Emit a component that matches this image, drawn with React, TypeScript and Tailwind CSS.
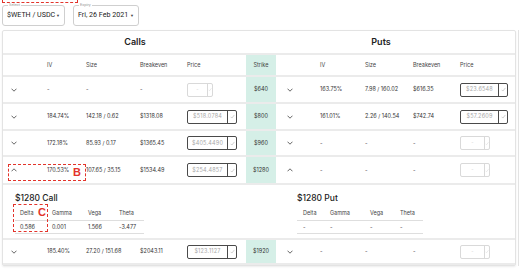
import React from 'react';

type Side = { iv: string; size: string; be: string; price: string | null; open?: boolean };
type Row = { strike: string; call: Side; put: Side; h: string };

const rows: Row[] = [
  { strike: '$640', h: 'h-[27px]', call: { iv: '-', size: '-', be: '-', price: null }, put: { iv: '163.75%', size: '7.98 / 160.02', be: '$616.35', price: '$23.6548' } },
  { strike: '$800', h: 'h-[27px]', call: { iv: '184.74%', size: '142.18 / 0.62', be: '$1318.08', price: '$518.0784' }, put: { iv: '161.01%', size: '2.26 / 140.54', be: '$742.74', price: '$57.2609' } },
  { strike: '$960', h: 'h-[26px]', call: { iv: '172.18%', size: '85.93 / 0.17', be: '$1365.45', price: '$405.4490' }, put: { iv: '-', size: '-', be: '-', price: null } },
  { strike: '$1280', h: 'h-[28px]', call: { iv: '170.53%', size: '107.65 / 35.15', be: '$1534.49', price: '$254.4857', open: true }, put: { iv: '-', size: '-', be: '-', price: null, open: true } },
  { strike: '$1920', h: 'h-[25px]', call: { iv: '185.40%', size: '27.20 / 151.68', be: '$2043.11', price: '$123.1127' }, put: { iv: '-', size: '-', be: '-', price: null } },
];

function Chevron({ up }: { up?: boolean }) {
  return (
    <svg width="6" height="4" viewBox="0 0 6 4" className={up ? 'rotate-180' : ''}>
      <path d="M0.5 0.7 L3 3.2 L5.5 0.7" fill="none" stroke="#555" strokeWidth="0.9" />
    </svg>
  );
}

function Check({ light }: { light?: boolean }) {
  return (
    <svg width="5" height="5" viewBox="0 0 8 8">
      <path d="M1 4.5 L3 6.5 L7 1.5" fill="none" stroke={light ? '#d6d6d6' : '#b5b5b5'} strokeWidth="1" />
    </svg>
  );
}

function PriceInput({ value, wide }: { value: string | null; wide?: boolean }) {
  if (!value) {
    return (
      <div className={`flex h-[14px] border border-[#d9d9d9] rounded-[2px] ${wide ? 'w-[30px]' : 'w-[26px]'}`}>
        <div className="flex-1 flex items-center justify-center text-[5px] text-[#cfcfcf]">-</div>
        <div className="w-[5px] border-l border-[#d9d9d9] flex items-center justify-center">
          <Check light />
        </div>
      </div>
    );
  }
  return (
    <div className={`flex h-[14px] border border-[#4a4a4a] rounded-[2px] ${wide ? 'w-[48px]' : 'w-[50px]'}`}>
      <div className="flex-1 flex items-center justify-center text-[5.5px] text-[#a8a8a8] tracking-[0.2px]">{value}</div>
      <div className="w-[9px] border-l border-[#4a4a4a] flex items-center justify-center">
        <Check />
      </div>
    </div>
  );
}

function Select({ label, value, w }: { label: string; value: string; w: string }) {
  return (
    <div className={`relative h-[21px] ${w} border border-[#cfcfcf] rounded-[3px] flex items-center justify-between pl-[4px] pr-[4px] font-['Roboto',sans-serif]`}>
      <span className="absolute -top-[4px] left-[5px] bg-white px-[1px] text-[4px] leading-[6px] text-[#999]">{label}</span>
      <span className="text-[7.1px] text-[#222] whitespace-nowrap">{value}</span>
      <span className="text-[4px] text-[#444]">▼</span>
    </div>
  );
}

function Greeks({ values, widths, first }: { values: string[]; widths: string[]; first: string }) {
  const heads = ['Delta', 'Gamma', 'Vega', 'Theta'];
  return (
    <div className="mt-[3px]">
      <div className="flex h-[14px] items-center border-b border-[#dedede]">
        {heads.map((h, i) => (
          <div key={h} className={`${widths[i]} ${i === 0 ? first : 'pl-[5px]'} text-[5.5px] text-[#444]`}>{h}</div>
        ))}
      </div>
      <div className="flex h-[13px] items-center border-b border-[#dedede]">
        {values.map((v, i) => (
          <div key={i} className={`${widths[i]} ${i === 0 ? first : 'pl-[5px]'} text-[5.5px] text-[#333]`}>{v}</div>
        ))}
      </div>
    </div>
  );
}

export default function App() {
  const cell = 'flex items-center text-[5.5px] text-[#333]';
  return (
    <div className="relative w-[520px] h-[272px] overflow-hidden bg-white font-['Inter',sans-serif]">
      {/* Selects */}
      <div className="flex gap-[8px] pl-[2px] pt-[5px]">
        <Select label="Select" value="$WETH / USDC" w="w-[63px]" />
        <Select label="Expiry" value="Fri, 26 Feb 2021" w="w-[66px]" />
      </div>

      <div className="flex mt-[4px] pl-[2px]">
        {/* Options chain card */}
        <div className="w-[514px] border border-[#e3e3e3] rounded-[2px] shadow-[0_1px_2px_rgba(0,0,0,0.08)]">
          <div className="flex h-[24px] border-b-2 border-[#ebebeb] items-center text-[9px] font-semibold text-[#222]">
            <div className="w-[244px] pl-[20px] text-center">Calls</div>
            <div className="flex-1 text-center">Puts</div>
          </div>

          {/* Column headers */}
          <div className="flex h-[22px] border-b-2 border-[#ebebeb] text-[5.5px] text-[#444]">
            <div className="w-[44px]" />
            <div className="w-[39px] flex items-center">IV</div>
            <div className="w-[54px] flex items-center">Size</div>
            <div className="w-[47px] flex items-center">Breakeven</div>
            <div className="w-[59px] flex items-center">Price</div>
            <div className="w-[30px] flex items-center justify-center bg-[#d5efe7]">Strike</div>
            <div className="w-[44px]" />
            <div className="w-[45px] flex items-center">IV</div>
            <div className="w-[48px] flex items-center">Size</div>
            <div className="w-[47px] flex items-center">Breakeven</div>
            <div className="flex-1 flex items-center">Price</div>
          </div>

          {rows.map((r) => (
            <React.Fragment key={r.strike}>
              <div className={`flex ${r.h} border-b-2 border-[#ebebeb]`}>
                <div className="w-[44px] flex items-center pl-[8px]"><Chevron up={r.call.open} /></div>
                <div className={`w-[39px] ${cell}`}>{r.call.iv}</div>
                <div className={`w-[54px] ${cell}`}>{r.call.size}</div>
                <div className={`w-[47px] ${cell}`}>{r.call.be}</div>
                <div className="w-[59px] flex items-center"><PriceInput value={r.call.price} /></div>
                <div className={`w-[30px] ${cell} justify-center bg-[#d5efe7]`}>{r.strike}</div>
                <div className="w-[44px] flex items-center pl-[11px]"><Chevron up={r.put.open} /></div>
                <div className={`w-[45px] ${cell}`}>{r.put.iv}</div>
                <div className={`w-[48px] ${cell}`}>{r.put.size}</div>
                <div className={`w-[47px] ${cell}`}>{r.put.be}</div>
                <div className="flex-1 flex items-center"><PriceInput value={r.put.price} wide /></div>
              </div>

              {r.call.open && (
                <div className="flex h-[55px] border-b-2 border-[#ebebeb]">
                  <div className="w-[294px] pl-[12px] pt-[8px]">
                    <div className="text-[8.5px] leading-[11px] font-medium text-[#222]">$1280 Call</div>
                    <div className="w-[129px]">
                      <Greeks values={['0.586', '0.001', '1.566', '-3.477']} widths={['w-[32px]', 'w-[36px]', 'w-[31px]', 'w-[30px]']} first="pl-[5px]" />
                    </div>
                  </div>
                  <div className="pt-[8px]">
                    <div className="text-[8.5px] leading-[11px] font-medium text-[#222]">$1280 Put</div>
                    <div className="w-[126px]">
                      <Greeks values={['-', '-', '-', '-']} widths={['w-[28px]', 'w-[40px]', 'w-[30px]', 'w-[28px]']} first="pl-[6px]" />
                    </div>
                  </div>
                </div>
              )}
            </React.Fragment>
          ))}
        </div>
        <div className="ml-[2px] w-[1px] bg-[#e3e3e3]" />
      </div>

      {/* Annotation overlays */}
      <div className="absolute left-[2px] top-[-20px] w-[76px] h-[23px] border-[1.5px] border-dashed border-[#e3342b]" />
      <div className="absolute left-[8px] top-[164px] w-[78px] h-[17px] border-[1.5px] border-dashed border-[#e3342b]">
        <span className="absolute left-[64px] top-[1px] text-[11px] leading-[13px] font-bold text-[#e3342b] font-['Liberation_Sans',sans-serif]">B</span>
      </div>
      <div className="absolute left-[13px] top-[204px] w-[35px] h-[28px] border-[1.5px] border-dashed border-[#e3342b]">
        <span className="absolute left-[24px] top-[1px] text-[11px] leading-[13px] font-bold text-[#e3342b] font-['Liberation_Sans',sans-serif]">C</span>
      </div>
    </div>
  );
}
